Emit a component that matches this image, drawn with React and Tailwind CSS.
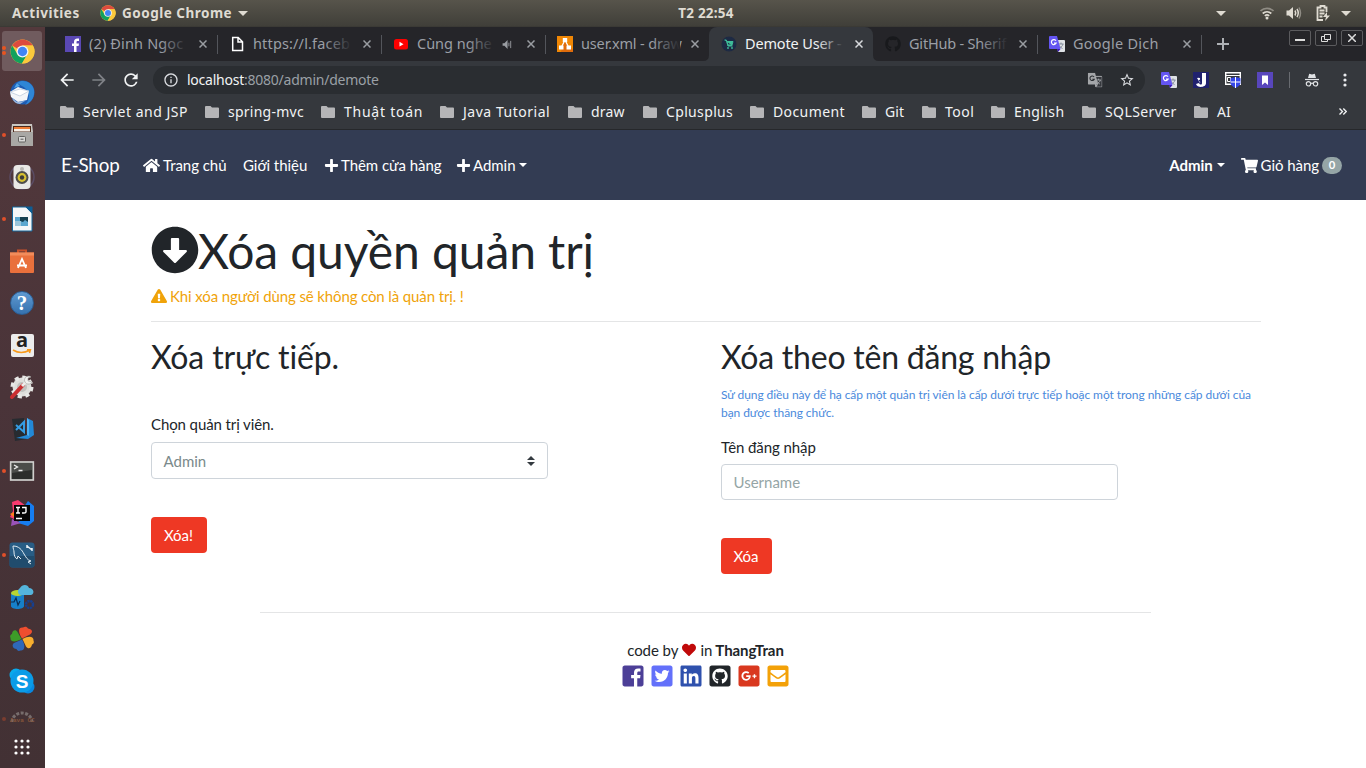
import React from "react";
import {
  FaHome, FaPlus, FaArrowAltCircleDown, FaExclamationTriangle, FaShoppingCart,
  FaHeart, FaTwitterSquare, FaLinkedin, FaGithubSquare, FaGooglePlusSquare, FaEnvelopeSquare, FaGithub,
} from "react-icons/fa";
import { MdStarBorder, MdArrowBack, MdArrowForward, MdRefresh, MdInfoOutline } from "react-icons/md";

function Chrome({ className }) {
  return (
    <svg viewBox="0 0 48 48" className={className}>
      <circle cx="24" cy="24" r="23" fill="#fbc93c" />
      <path d="M24 24 4.1 12.5A23 23 0 0 1 43.9 12.5H24z" fill="#dd4b3e" />
      <path d="M4.1 12.5A23 23 0 0 0 23 47L33.5 29 24 24 14 29z" fill="#12a15d" />
      <path d="M24 12.5h19.9A23 23 0 0 1 23 47L33.8 29.5z" fill="#fbc93c" />
      <circle cx="24" cy="24" r="11.5" fill="#f4f4f4" />
      <circle cx="24" cy="24" r="9" fill="#4285f4" />
    </svg>
  );
}

function Thunderbird() {
  return (
    <svg viewBox="0 0 26 26" className="size-[26px]">
      <circle cx="13.5" cy="12.5" r="12" fill="#1d5cb4" />
      <path d="M8 3C13-1 23 1 25 10c1 7-3 13-9 15 5-5 5-12 1-16-3-3-6-4-9-6z" fill="#2f86d6" />
      <path d="M8 3 5 8l6-2z" fill="#4fa6ea" />
      <path d="M1 12 9 7l11 4-2 9-9 2-7-5z" fill="#f3f5f8" />
      <path d="m1 12 10 4 9-5-9-2z" fill="#fff" stroke="#b4c4d8" strokeWidth=".7" />
      <path d="m3 18 5 4 8-1-5 3c-4 0-7-3-8-6z" fill="#9bb7dc" />
    </svg>
  );
}
function Files() {
  return (
    <svg viewBox="0 0 26 26" className="size-[26px]">
      <path d="M3 2h20l1 8v13a1 1 0 0 1-1 1H3a1 1 0 0 1-1-1V10z" fill="#c9c7c3" />
      <path d="M4 4h18v6H4z" fill="#4c2a1c" />
      <path d="M5 5h16v2H5z" fill="#ef7c35" />
      <path d="M5 7h16v2.5H5z" fill="#f6efe6" />
      <path d="M2 10h22v13a1 1 0 0 1-1 1H3a1 1 0 0 1-1-1z" fill="#a9a8a5" />
      <rect x="9.5" y="14.5" width="7" height="5.5" rx="1" fill="#d8d8d6" stroke="#626260" />
      <path d="M11.5 17.2h3" stroke="#555" />
    </svg>
  );
}
function Rhythmbox() {
  return (
    <svg viewBox="0 0 26 26" className="size-[26px]">
      <circle cx="13" cy="13" r="12" fill="none" stroke="#5a4c64" strokeWidth="1.5" />
      <rect x="4.5" y="1" width="17" height="24" rx="4" fill="#e9e9e6" />
      <circle cx="13" cy="5" r="2" fill="#b9b9b4" />
      <circle cx="13" cy="13.5" r="6.5" fill="#4e4e4c" />
      <circle cx="13" cy="13.5" r="4.4" fill="#d8c230" />
      <circle cx="13" cy="13.5" r="2.2" fill="#3e3d38" />
    </svg>
  );
}
function Writer() {
  return (
    <svg viewBox="0 0 26 26" className="size-[26px]">
      <path d="M3.500 1H17l6 6v18H3.500z" fill="#f5f7f8" stroke="#13669b" />
      <path d="M16 .5h7.500V8z" fill="#0d5e95" />
      <path d="M6 11h13v9H6z" fill="#5ba7cf" />
      <path d="M11 11h8v5l-3-2-2 2-3-1z" fill="#143f50" />
      <path d="M6 15h6v5H6z" fill="#9bc6dc" />
    </svg>
  );
}
function Software() {
  return (
    <svg viewBox="0 0 26 26" className="size-[26px]">
      <path d="M9 6V2.500h8V6" fill="none" stroke="#c9512a" strokeWidth="2" />
      <path d="M1 4.500h24V24a1 1 0 0 1-1 1H2a1 1 0 0 1-1-1z" fill="#e9703c" />
      <path d="M1 4.500h24v3H1z" fill="#f28c5b" />
      <path d="m9 20 4-9 4 9M8 17.500h10" fill="none" stroke="#fff" strokeWidth="1.800" />
    </svg>
  );
}
function Help() {
  return (
    <span className="flex size-6 items-center justify-center rounded-full border border-[#2a5d93] bg-linear-to-b from-[#5f9ad2] to-[#3672ae] font-['Liberation_Serif',serif] text-[21px] leading-none font-bold text-white">?</span>
  );
}
function Amazon() {
  return (
    <span className="flex size-[23px] flex-col items-center rounded-[2px] bg-[#ececec]">
      <span className="h-[15px] font-['Open_Sans',sans-serif] text-[20px] leading-[12px] font-bold text-[#222]">a</span>
      <svg viewBox="0 0 20 6" className="h-[6px] w-5"><path d="M1 1q8 5 17 0M15 .5h3.500l-1 3.500" fill="none" stroke="#f79a1c" strokeWidth="1.500" /></svg>
    </span>
  );
}
function Tweaks() {
  return (
    <svg viewBox="0 0 26 26" className="size-[26px]">
      <circle cx="13" cy="13" r="9.500" fill="#dededb" stroke="#e8e8e6" strokeWidth="4" strokeDasharray="4 3.460" />
      <circle cx="13" cy="13" r="5" fill="#c1c1be" />
      <path d="m3 23 11-12" stroke="#ca2f31" strokeWidth="4" strokeLinecap="round" />
      <path d="m13 12 4-4" stroke="#ededeb" strokeWidth="3" />
      <path d="M22 3a4 4 0 1 0 1 5l-4-1v-3z" fill="#f1f1ef" stroke="#9d9d9a" strokeWidth=".6" />
    </svg>
  );
}
function VsCode() {
  return (
    <svg viewBox="0 0 26 26" className="size-[26px]">
      <path d="m3 3 12-1 3 21-12 2z" fill="#272b30" />
      <path d="m18 2 6 3 1 14-6 4-12-1 11-3z" fill="#2389d7" />
      <path d="m18 2 2 2v16l-2-1z" fill="#50b1f1" />
      <path d="m7 9 8 7V6l-8 8" fill="none" stroke="#359ce3" strokeWidth="2" />
    </svg>
  );
}
function Terminal() {
  return (
    <svg viewBox="0 0 26 26" className="size-[26px]">
      <rect x="1.700" y="4" width="22.600" height="18" fill="#2c2e2c" stroke="#cfcfcd" strokeWidth="1.700" />
      <path d="M3 5h20v7L3 15z" fill="#4b4d4a" />
      <path d="m5 7 3.500 2L5 11M9.500 12.500h4" fill="none" stroke="#eee" strokeWidth="1.300" />
    </svg>
  );
}
function Idea() {
  return (
    <svg viewBox="0 0 26 26" className="size-[26px]">
      <path d="M3 2 9 0l8 6-8 15-8-4 3-6z" fill="#f93a6f" />
      <path d="m1 14 6-3v8z" fill="#fc801d" />
      <path d="m15 7 4-6 6 5v15l-6 5-10-3z" fill="#167df0" />
      <path d="m3 19-1 7 10-3z" fill="#9a53b8" />
      <path d="M5 5h16v16H5z" fill="#050505" />
      <path d="M7 7.500h4M9 7.500V13M7 13h4M13 7.500h4V12q0 1-2 1h-2M7 18.500h6" fill="none" stroke="#fff" strokeWidth="1.400" />
    </svg>
  );
}
function Workbench() {
  return (
    <svg viewBox="0 0 26 26" className="size-[26px]">
      <rect x=".5" y=".5" width="25" height="25" rx="3" fill="#285d85" />
      <path d="M.5 14h25v8.500a3 3 0 0 1-3 3h-19a3 3 0 0 1-3-3z" fill="#204c6d" />
      <path d="M4 4c6 0 9 4 11 8 2 3 3 6 7 7l-3 1 3 2M4 4c0 3 1 4 1 6 0 3 1 6 3 7l1-3 3 3" fill="none" stroke="#e0ebf2" strokeWidth="1" />
      <path d="m18 4 5 4M18 3v3M23 6v3" stroke="#e7eff5" strokeWidth="1.500" />
    </svg>
  );
}
function AzureData() {
  return (
    <svg viewBox="0 0 26 26" className="size-[26px]">
      <path d="M2 9v13c0 4 13 4 13 0V9z" fill="#1780c9" />
      <ellipse cx="8.500" cy="9" rx="6.500" ry="3" fill="#b9d532" />
      <path d="M11 11a4 4 0 0 1 0-7c2-4 8-4 9 0 5 0 6 6 2 7z" fill="#55b5dc" />
      <path d="M2 18h3l2-4 2 7 2-4" fill="none" stroke="#0b2c52" strokeWidth="1.200" />
      <circle cx="20.500" cy="20.500" r="3.500" fill="none" stroke="#173f8e" strokeWidth="2.500" strokeDasharray="2.200 .6" />
    </svg>
  );
}
function Clover() {
  return (
    <svg viewBox="0 0 26 26" className="size-[26px]">
      <path d="M13 12.500C9 6 9 1 14 1.500c2-1.500 4-1 5 1 5 1 5 4 2 6z" fill="#ee4e2f" />
      <path d="M12.500 13C6 17 1 15.500 1.500 12c-1-2 0-3.500 1.500-4 0-4 4-5 5.500-2z" fill="#3d9b28" />
      <path d="M13 13.500c4 6.500 2.500 11.500-1.500 11-2 1-3.500 0-4-1.500-4-.5-5-4-2.500-6z" fill="#2e68ba" />
      <path d="M13.500 13c6.500-4 11.500-2.500 11 1.500 1 2 0 3.500-1.500 4-.5 4-4 5-6 2z" fill="#f8ae2f" />
    </svg>
  );
}
function Skype() {
  return (
    <span className="relative flex size-[26px] items-center justify-center">
      <svg viewBox="0 0 26 26" className="absolute inset-0 size-[26px]">
        <circle cx="7" cy="7" r="6.500" fill="#08a9ec" />
        <circle cx="19" cy="19" r="6.500" fill="#0888e0" />
        <circle cx="13" cy="13" r="11.500" fill="#0a9ce8" />
      </svg>
      <span className="relative font-['Liberation_Sans',sans-serif] text-[19px] leading-none font-bold text-white">S</span>
    </span>
  );
}

const dock = [Thunderbird, Files, Rhythmbox, Writer, Software, Help, Amazon, Tweaks, VsCode, Terminal, Idea, Workbench, AzureData, Clover, Skype];
const running = [1, 3, 9, 11];

function Dock() {
  return (
    <aside className="flex w-[45px] shrink-0 flex-col bg-linear-to-b from-[#53393c] via-[#4a3439] to-[#423134] pt-1">
      <div className="relative ml-[2px] flex h-10 w-10 items-center justify-center rounded-[3px] bg-[#705b5e]">
        <Chrome className="size-[25px]" />
        <i className="absolute top-[15px] left-0 size-[4px] rounded-full bg-[#e95420]" />
        <i className="absolute top-[20px] left-0 size-[4px] rounded-full bg-[#e95420]" />
      </div>
      <div className="mt-px flex flex-col">
        {dock.map((Icon, i) => (
          <div key={i} className="relative flex h-[42px] w-[44px] items-center justify-center">
            {running.includes(i) && <i className="absolute top-[19px] left-[2px] size-[4px] rounded-full bg-[#e0502a]" />}
            <Icon />
          </div>
        ))}
      </div>
      <div className="relative mt-[7px] flex h-4 w-[44px] items-center justify-center overflow-hidden opacity-60">
        <i className="absolute top-2 left-[2px] size-[4px] rounded-full bg-[#a0452c]" />
        <svg viewBox="0 0 26 16" className="h-4 w-[26px]">
          <path d="M3 13a10 9 0 0 1 20 0" fill="none" stroke="#9a9592" strokeWidth="3" strokeDasharray="3 1.500" />
          <text x="13" y="13" textAnchor="middle" fontSize="6" fontWeight="bold" fontFamily="Liberation Mono" fill="#b06a3c">Java CC</text>
        </svg>
      </div>
      <svg viewBox="0 0 18 18" className="mt-[13px] ml-[13px] size-[18px] shrink-0" fill="#fff">
        {[3, 9, 15].map((y) => [3, 9, 15].map((x) => <circle key={x + "-" + y} cx={x} cy={y} r="1.600" />))}
      </svg>
    </aside>
  );
}

function Down({ className }) {
  return <svg viewBox="0 0 10 5" className={className}><path d="M0 0h10L5 5z" fill="#dfdbd2" /></svg>;
}

function TopBar() {
  return (
    <header className="grid h-[27px] shrink-0 grid-cols-3 items-center border-b border-[#3b3a35] bg-linear-to-b from-[#57544b] to-[#403f39] font-['Noto_Sans',sans-serif] text-[13.500px] font-bold text-[#dfdbd2]">
      <div className="flex items-center pl-3">
        <span className="w-[68px] tracking-[0.500px] whitespace-nowrap">Activities</span>
        <Chrome className="ml-5 size-4" />
        <span className="ml-[6px] w-[111px] tracking-[0.500px] whitespace-nowrap">Google Chrome</span>
        <Down className="ml-[5px] h-[5px] w-[10px]" />
      </div>
      <div className="pl-[46px] text-center tracking-[0.200px]">T2 22:54</div>
      <div className="flex items-center justify-end pr-[15px]">
        <Down className="mr-[34px] h-[5px] w-[10px]" />
        <svg viewBox="0 0 14 14" className="mr-3 size-[14px]" fill="none" strokeWidth="1.700">
          <path d="M.5 5a9.500 9.500 0 0 1 13 0" stroke="#8f8c84" />
          <path d="M2.700 7.500a6.500 6.500 0 0 1 8.600 0M4.800 9.800a3.500 3.500 0 0 1 4.400 0" stroke="#dfdbd2" />
          <circle cx="7" cy="12" r="1.500" fill="#dfdbd2" />
        </svg>
        <svg viewBox="0 0 16 14" className="mr-[14px] h-[14px] w-4" fill="none" strokeWidth="1.500">
          <path d="M.5 4.500H3L7 1v12L3 9.500H.5z" fill="#dfdbd2" />
          <path d="M9 4.500q1.500 2.500 0 5M11 3q2.500 4 0 8" stroke="#dfdbd2" />
          <path d="M13 1.500q3 5.500 0 11" stroke="#8f8c84" />
        </svg>
        <svg viewBox="0 0 14 16" className="mr-[11px] h-4 w-[14px]" fill="none" stroke="#dfdbd2" strokeWidth="1.800">
          <path d="M10.500 7V2.500h-2V1h-4v1.500h-3V15H7M3.500 5.500h5M3.500 8.500h5M3.500 11.500h3" />
          <path d="m11 7-4 5h3l-1 4 5-5.500h-3z" fill="#dfdbd2" stroke="none" />
        </svg>
        <Down className="h-[5px] w-[10px]" />
      </div>
    </header>
  );
}

function Close({ active }) {
  return (
    <svg viewBox="0 0 8 8" className="size-2 shrink-0" stroke={active ? "#d7d9dc" : "#9a9da2"} strokeWidth="1.500"><path d="m.5.5 7 7m0-7-7 7" /></svg>
  );
}

function Translate({ mono }) {
  return (
    <svg viewBox="0 0 16 16" className="size-4">
      <path d="M7 4h8a1 1 0 0 1 1 1v10a1 1 0 0 1-1 1H9z" fill={mono ? "#35383d" : "#dfe2e6"} stroke={mono ? "#b4b6b9" : "none"} />
      <path d="M9 8h5.500M12 6.500V8m2 0c-.5 2-2 3.500-4 4.500m.5-3c1 2 2 2.500 3 3" stroke={mono ? "#b4b6b9" : "#7c8594"} strokeWidth=".9" fill="none" />
      <path d="M1 0h7l3.500 13H1a1 1 0 0 1-1-1V1a1 1 0 0 1 1-1z" fill={mono ? "#a4a6a9" : "#6455f2"} />
      <path d="M11.500 13 9 16l-1-3z" fill={mono ? "#a4a6a9" : "#3b14b8"} />
      <path d="M7 4.700a2.500 2.500 0 1 0 .2 2.400H5" stroke={mono ? "#2b2e32" : "#fff"} strokeWidth="1.200" fill="none" />
    </svg>
  );
}

const facebookPath = "M448 80v352c0 26.500-21.500 48-48 48h-85.300V302.800h60.600l8.700-67.600h-69.300V192c0-19.600 5.400-32.900 33.500-32.900H384V98.700c-6.200-.8-27.400-2.700-52.200-2.700-51.600 0-87 31.500-87 89.400v49.900H184v67.600h60.900V480H48c-26.500 0-48-21.500-48-48V80c0-26.500 21.500-48 48-48h352c26.500 0 48 21.500 48 48z";

const tabs = [
  { icon: <span className="flex size-4 bg-[#5a48b4]"><svg viewBox="0 0 16 16" className="size-4"><path d="M9 16V10H7V7.500h2V6c0-2.300 1.200-3.600 3.500-3.600H14V5h-1.300C11.800 5 11.500 5.500 11.500 6v1.500H14L13.600 10h-2.100v6z" fill="#fff" /></svg></span>, text: "(2) Đinh Ngọc", label: "tracking-[0.150px]", fade: true },
  { icon: <svg viewBox="0 0 16 16" className="size-4" fill="none" stroke="#fff" strokeWidth="1.500"><path d="M3.700 1.500h5.500l4.300 4.300v8.700H3.700zM9 1.500V6h4.500" /></svg>, text: "https://l.faceb", label: "tracking-[0.150px]", fade: true },
  { icon: <svg viewBox="0 0 16 16" className="size-4"><rect x="1" y="3" width="14" height="10.500" rx="2.500" fill="#f00" /><path d="m6.500 5.800 4 2.400-4 2.400z" fill="#fff" /></svg>, text: "Cùng nghe", label: "tracking-[0px]", audio: true, fade: true },
  { icon: <svg viewBox="0 0 16 16" className="size-4"><rect width="16" height="16" fill="#f08705" /><path d="m7 5 9 9v2H4z" fill="#df6c0c" /><path d="M8 4 4 12m4-8 4 8" stroke="#fff" strokeWidth="1.300" /><path d="M5.800 2h4.400v4H5.800zM2 9.500h4.500v4H2zM9.500 9.500H14v4H9.500z" fill="#fff" /></svg>, text: "user.xml - draw", label: "tracking-[-0.150px]", fade: true },
  { icon: <svg viewBox="0 0 16 16" className="size-4"><circle cx="8" cy="8" r="7.500" fill="#1d2a44" /><path d="M3.500 4h1.800l1.600 6h4.700M6 5.500h6l-1 3.500H7z" fill="#3ebc99" stroke="#3ebc99" /><circle cx="7" cy="12" r=".9" fill="#3ebc99" /><circle cx="11" cy="12" r=".9" fill="#3ebc99" /></svg>, text: "Demote User -", label: "tracking-[-0.150px]", active: true, fade: true },
  { icon: <FaGithub className="size-4 text-[#18191c]" />, text: "GitHub - Sherif", label: "tracking-[-0.200px]", fade: true },
  { icon: <Translate />, text: "Google Dịch", label: "tracking-[0.250px]" },
];

function Tab({ tab, index }) {
  const edge = index === 3 ? "border-transparent" : "border-[#53555b]";
  return (
    <div className={"relative flex h-[34px] w-[164px] shrink-0 items-center pl-3 " + (tab.active ? "rounded-t-lg bg-[#35383d]" : "")}>
      {tab.icon}
      <div className={"relative ml-2 text-[14.500px] whitespace-nowrap " + (tab.audio ? "w-[78px] " : "w-[99px] ") + tab.label + (tab.active ? " text-[#f1f3f4]" : " text-[#9b9fa6]")}>
        {tab.text}
        {tab.fade && <span className={"absolute inset-y-0 right-0 w-7 bg-linear-to-r from-transparent " + (tab.active ? "to-[#35383d]" : "to-[#252529]")} />}
      </div>
      {tab.audio && (
        <svg viewBox="0 0 12 10" className="ml-[7px] h-[9px] w-3 shrink-0"><path d="M0 3.500h2L5.500 0v10L2 6.500H0z" fill="#9a9da2" /><path d="M7 3v4M9 1v8" stroke="#9a9da2" /></svg>
      )}
      <div className="ml-auto pr-[10px]"><Close active={tab.active} /></div>
      <span className={"-mr-px h-[19px] border-r " + (tab.active ? "border-transparent" : edge)} />
      {tab.active && (
        <>
          <svg viewBox="0 0 6 6" className="absolute bottom-0 -left-[6px] size-[6px]"><path d="M6 0v6H0q6 0 6-6" fill="#35383d" /></svg>
          <svg viewBox="0 0 6 6" className="absolute -right-[6px] bottom-0 size-[6px]"><path d="M0 0v6h6Q0 6 0 0" fill="#35383d" /></svg>
        </>
      )}
    </div>
  );
}

const bookmarks = [
  ["Servlet and JSP", "w-[145px] tracking-[0.500px]"], ["spring-mvc", "w-[116px] tracking-[0.250px]"], ["Thuật toán", "w-[119px] tracking-[0.750px]"], ["Java Tutorial", "w-[128px] tracking-[0.520px]"],
  ["draw", "w-[75px] tracking-[0.200px]"], ["Cplusplus", "w-[107px] tracking-[0.350px]"], ["Document", "w-[112px] tracking-[0.400px]"], ["Git", "w-[60px] tracking-[0.100px]"], ["Tool", "w-[69px] tracking-[0.500px]"],
  ["English", "w-[91px] tracking-[0.400px]"], ["SQLServer", "w-[112px] tracking-[0.400px]"], ["AI", "w-[60px]"],
];

const winButton = "flex h-4 w-[22px] items-center justify-center rounded-[2px] border border-[#5b5b5e]";

function Browser() {
  return (
    <div className="shrink-0 bg-[#35383d] font-['Noto_Sans',sans-serif]">
      <div className="flex h-[34px] bg-[#252529] pl-2">
        {tabs.map((t, i) => <Tab key={i} tab={t} index={i} />)}
        <svg viewBox="0 0 12 12" className="mt-[11px] ml-4 size-3" stroke="#aeb1b5" strokeWidth="2"><path d="M6 0v12M0 6h12" /></svg>
        <div className="mt-[3px] mr-[3px] ml-auto flex gap-1">
          <span className={winButton}><i className="mt-1 h-[2px] w-[10px] bg-[#ddd]" /></span>
          <span className={winButton}><svg viewBox="0 0 10 8" className="h-2 w-[10px]" fill="none" stroke="#ddd"><path d="M3.500.5h6v5h-6zM3 2.500H.5v5h6V6" /></svg></span>
          <span className={winButton}><svg viewBox="0 0 8 8" className="size-2" stroke="#ddd" strokeWidth="1.500"><path d="m0 0 8 8m0-8-8 8" /></svg></span>
        </div>
      </div>
      <div className="flex h-[38px] items-center pl-[12px]">
        <MdArrowBack className="size-5 text-[#f1f3f4]" />
        <MdArrowForward className="ml-3 size-5 text-[#7f8287]" />
        <MdRefresh className="ml-3 size-5 text-[#f1f3f4]" />
        <div className="ml-3 flex h-7 w-[992px] items-center rounded-full bg-[#2a2d31] pr-[10px] pl-[10px]">
          <MdInfoOutline className="size-4 text-[#dadce0]" />
          <span className="ml-2 pb-px text-[14px] tracking-[-0.240px] text-[#9aa0a6]"><span className="text-[#f1f3f4]">localhost</span>:8080/admin/demote</span>
          <span className="mr-[16px] ml-auto scale-90"><Translate mono /></span>
          <MdStarBorder className="size-4 text-[#dadce0]" />
        </div>
        <div className="ml-4 flex items-center gap-4">
          <Translate />
          <svg viewBox="0 0 16 16" className="size-4"><rect width="16" height="16" fill="#20216e" /><path d="M9 1h4v10c0 5-9 5-10 1l3-1c1 2 3 2 3 0zM4 6q4-1 3 1.500L5 9q3 0 2 2" fill="#fff" /></svg>
          <svg viewBox="0 0 16 16" className="size-4"><path d="M.7.700h14.600v11.600H.7z" fill="#35383d" stroke="#fff" strokeWidth="1.400" /><path d="M1 3.500h14M2.500 5.500h3v4h-3z" stroke="#fff" fill="none" /><path d="m10.500 5 5 1.200v4.300c0 3-3 4.500-5 5.500-2-1-5-2.500-5-5.500V6.200z" fill="#3446e8" /><path d="M10.500 5v11M5.500 10h10" stroke="#fff" /></svg>
          <svg viewBox="0 0 16 16" className="size-4"><path d="M0 0h16v16H0z" fill="#5846bc" /><path d="M5 3.500h6V13L8 10.500 5 13z" fill="#fff" /></svg>
        </div>
        <span className="ml-4 h-4 w-px bg-[#686b70]" />
        <svg viewBox="0 0 14 14" className="ml-[15px] size-[14px]" fill="none" stroke="#e0e2e5" strokeWidth="1.200"><path d="M0 6.500h14" /><path d="M3 5 4.200.8 7 1.500 9.800.8 11 5z" fill="#e0e2e5" stroke="none" /><circle cx="3.500" cy="10.800" r="2.200" /><circle cx="10.500" cy="10.800" r="2.200" /><path d="M5.700 10.500q1.300-.7 2.600 0" /></svg>
        <svg viewBox="0 0 4 14" className="ml-[24px] h-[14px] w-1" fill="#e8eaed"><circle cx="2" cy="2" r="1.600" /><circle cx="2" cy="7" r="1.600" /><circle cx="2" cy="12" r="1.600" /></svg>
      </div>
      <div className="flex h-[31px] items-center border-b border-[#26282b] pb-[5px] pl-[15px] text-[14px] text-[#f1f3f4]">
        {bookmarks.map(([name, width]) => (
          <span key={name} className={"flex shrink-0 items-center whitespace-nowrap " + width}>
            <svg viewBox="0 0 14 12" className="mr-[9px] h-3 w-[14px] shrink-0"><path d="M1 0h4.500L7 1.500h6a1 1 0 0 1 1 1V11a1 1 0 0 1-1 1H1a1 1 0 0 1-1-1V1a1 1 0 0 1 1-1z" fill="#b5b5b7" /></svg>
            {name}
          </span>
        ))}
        <svg viewBox="0 0 8 7" className="mr-[19px] ml-auto h-[7px] w-2" fill="none" stroke="#f1f3f4" strokeWidth="1.400"><path d="m.5.5 3 3-3 3M4.300.5l3 3-3 3" /></svg>
      </div>
    </div>
  );
}

function Caret() {
  return <span className="ml-1 inline-block border-x-[4.500px] border-t-[4.500px] border-x-transparent align-[4px]" />;
}

function Navbar() {
  return (
    <nav className="flex h-[70px] items-center bg-[#333c53] pr-6 pl-4 text-[15px] leading-[22px] tracking-[-0.050px] whitespace-nowrap text-white">
      <span className="w-[82px] text-[18.750px] tracking-[-0.150px]">E-Shop</span>
      <span className="flex w-[100px] items-center gap-[3px]"><FaHome className="size-[17px]" />Trang chủ</span>
      <span className="w-[81px]">Giới thiệu</span>
      <span className="flex w-[132px] items-center gap-[2px]"><FaPlus className="size-[15px]" />Thêm cửa hàng</span>
      <span className="flex items-center gap-[2px]"><FaPlus className="size-[15px]" /><span>Admin<Caret /></span></span>
      <span className="mr-4 ml-auto font-bold">Admin<Caret /></span>
      <span className="flex items-center"><FaShoppingCart className="mr-[3px] size-[17px]" />Giỏ hàng<span className="ml-[3px] flex h-[17px] w-5 items-center justify-center rounded-full bg-[#95a5a6] text-[11.250px] font-bold">0</span></span>
    </nav>
  );
}

const red = "mt-[38px] flex h-9 items-center justify-center rounded-[4px] bg-[#ee3824] pr-px text-[15px] text-white ";

function Page() {
  return (
    <main className="flex-1 bg-white px-[106px] pt-[22px] text-[15px] leading-[22px] text-[#212529] [font-variant-ligatures:none]">
      <div className="w-[1110px]">
        <h1 className="flex h-[58px] items-center text-[48px] leading-[58px] tracking-[-0.080px] whitespace-nowrap"><FaArrowAltCircleDown className="mt-[-2px] size-12" /><span className="-ml-px">Xóa quyền quản trị</span></h1>
        <p className="mt-[5px] flex items-center gap-[3px] tracking-[-0.120px] text-[#f0a30a]"><FaExclamationTriangle className="size-4" />Khi xóa người dùng sẽ không còn là quản trị. !</p>
        <hr className="mt-[14px] border-[#e4e5e6]" />
        <div className="grid h-[290px] grid-cols-2 gap-[30px] pt-4">
          <section>
            <h2 className="h-[38px] text-[32px] leading-[38px] tracking-[-0.150px]">Xóa trực tiếp.</h2>
            <label className="mt-[37px] block tracking-[-0.100px]">Chọn quản trị viên.</label>
            <div className="mt-[7px] flex h-[37px] w-[397px] items-center justify-between rounded-[4px] border border-[#ced4da] pr-3 pl-[11.500px] text-[#7b8a8b]">Admin<svg viewBox="0 0 4 5" className="h-[10px] w-2" fill="#343a40"><path d="M2 0L0 2h4zm0 5L0 3h4z" /></svg></div>
            <button className={red + "w-14"}>Xóa!</button>
          </section>
          <section>
            <h2 className="h-[38px] text-[32px] leading-[38px] tracking-[-0.220px]">Xóa theo tên đăng nhập</h2>
            <small className="mt-[10px] block text-[12px] leading-[18px] tracking-[-0.065px] text-[#4a89dc]">Sử dụng điều này để hạ cấp một quản trị viên là cấp dưới trực tiếp hoặc một trong những cấp dưới của bạn được thăng chức.</small>
            <label className="mt-[14px] block tracking-[-0.080px]">Tên đăng nhập</label>
            <div className="mt-[6px] flex h-9 w-[397px] items-center rounded-[4px] border border-[#ced4da] px-[11.500px] text-[#95a5a6]">Username</div>
            <button className={red + "w-[51px]"}>Xóa</button>
          </section>
        </div>
      </div>
      <footer className="mx-auto ml-[109px] w-[891px] border-t border-[#e4e5e6] pt-[26px]">
        <p className="flex items-center justify-center gap-1 tracking-[-0.050px]">code by <FaHeart className="size-[14px] text-[#c00a0a]" /> in <b className="-ml-px">ThangTran</b></p>
        <div className="mt-[3px] flex justify-center gap-[5px]">
          <svg viewBox="0 0 448 512" className="size-6"><path fill="#4c3f97" d={facebookPath} /></svg>
          <FaTwitterSquare className="size-6 text-[#6370fa]" />
          <FaLinkedin className="size-6 text-[#2f51ad]" />
          <FaGithubSquare className="size-6 text-[#212529]" />
          <FaGooglePlusSquare className="size-6 text-[#d9381f]" />
          <FaEnvelopeSquare className="size-6 text-[#f3a108]" />
        </div>
      </footer>
    </main>
  );
}

export default function App() {
  return (
    <div className="flex h-[768px] w-[1366px] flex-col overflow-hidden bg-white">
      <TopBar />
      <div className="flex min-h-0 flex-1">
        <Dock />
        <div className="flex min-w-0 flex-1 flex-col font-[Lato,sans-serif]">
          <Browser />
          <Navbar />
          <Page />
        </div>
      </div>
    </div>
  );
}
